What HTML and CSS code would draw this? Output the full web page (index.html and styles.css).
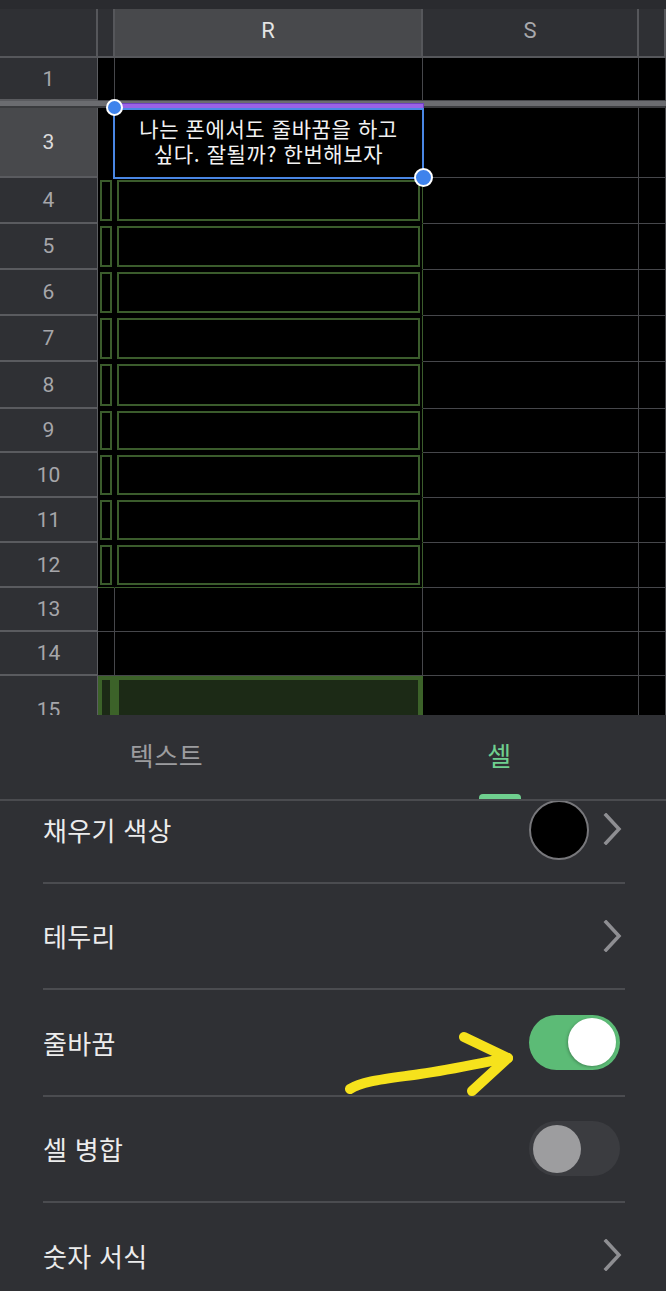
FILE: index.html
```html
<!DOCTYPE html>
<html lang="ko">
<head>
<meta charset="utf-8">
<title>Sheet</title>
<link rel="stylesheet" href="styles.css">
</head>
<body>
<div class="screen">
  <div class="sheet">
    <div class="topstrip"></div>
    <div class="row hdr">
      <div class="c rh"></div><div class="c q"></div><div class="c r colsel">R</div><div class="c s">S</div><div class="c t"></div>
    </div>
    <div class="row h43">
      <div class="c rh">1</div><div class="c q"></div><div class="c r"></div><div class="c s"></div><div class="c t"></div>
    </div>
    <div class="freeze"></div>
    <div class="row h70">
      <div class="c rh rowsel">3</div><div class="c q gq3"></div><div class="c r wrap"><span class="ln">나는 폰에서도 줄바꿈을 하고</span><span class="ln">싶다. 잘될까? 한번해보자</span></div><div class="c s"></div><div class="c t"></div>
    </div>
    <div class="row h46"><div class="c rh">4</div><div class="c q g"></div><div class="c r g gr"></div><div class="c s"></div><div class="c t"></div></div>
    <div class="row h46"><div class="c rh">5</div><div class="c q g"></div><div class="c r g gr"></div><div class="c s"></div><div class="c t"></div></div>
    <div class="row h46"><div class="c rh">6</div><div class="c q g"></div><div class="c r g gr"></div><div class="c s"></div><div class="c t"></div></div>
    <div class="row h46"><div class="c rh">7</div><div class="c q g"></div><div class="c r g gr"></div><div class="c s"></div><div class="c t"></div></div>
    <div class="row h47"><div class="c rh">8</div><div class="c q g"></div><div class="c r g gr"></div><div class="c s"></div><div class="c t"></div></div>
    <div class="row h44"><div class="c rh">9</div><div class="c q g"></div><div class="c r g gr"></div><div class="c s"></div><div class="c t"></div></div>
    <div class="row h45"><div class="c rh">10</div><div class="c q g"></div><div class="c r g gr"></div><div class="c s"></div><div class="c t"></div></div>
    <div class="row h45"><div class="c rh">11</div><div class="c q g"></div><div class="c r g gr"></div><div class="c s"></div><div class="c t"></div></div>
    <div class="row h45 glast"><div class="c rh">12</div><div class="c q g"></div><div class="c r g gr"></div><div class="c s"></div><div class="c t"></div></div>
    <div class="row h44"><div class="c rh">13</div><div class="c q"></div><div class="c r"></div><div class="c s"></div><div class="c t"></div></div>
    <div class="row h44"><div class="c rh">14</div><div class="c q"></div><div class="c r"></div><div class="c s"></div><div class="c t"></div></div>
    <div class="row h70"><div class="c rh">15</div><div class="c q fill15 fq"></div><div class="c r fill15"></div><div class="c s"></div><div class="c t"></div></div>

    <div class="sel-top"></div>
    <div class="selection"></div>
    <div class="handle h-tl"></div>
    <div class="handle h-br"></div>
  </div>

  <div class="panel">
    <div class="tabs">
      <div class="tab"><span class="tab-label">텍스트</span><span class="tab-ind"></span></div>
      <div class="tab active"><span class="tab-label">셀</span><span class="tab-ind"></span></div>
    </div>
    <div class="list">
      <div class="items">
        <div class="item">
          <span class="item-label">채우기 색상</span>
          <span class="item-right">
            <span class="swatch"></span>
            <svg class="chev" width="20" height="32" viewBox="0 0 20 32"><path d="M3 2 L16 16 L3 30" fill="none" stroke="#8e8e92" stroke-width="3.5" stroke-linecap="square"/></svg>
          </span>
        </div>
        <div class="item">
          <span class="item-label">테두리</span>
          <span class="item-right">
            <svg class="chev" width="20" height="32" viewBox="0 0 20 32"><path d="M3 2 L16 16 L3 30" fill="none" stroke="#8e8e92" stroke-width="3.5" stroke-linecap="square"/></svg>
          </span>
        </div>
        <div class="item">
          <span class="item-label">줄바꿈</span>
          <span class="item-right">
            <span class="toggle on"><span class="knob"></span></span>
          </span>
        </div>
        <div class="item">
          <span class="item-label">셀 병합</span>
          <span class="item-right">
            <span class="toggle off"><span class="knob"></span></span>
          </span>
        </div>
        <div class="item">
          <span class="item-label">숫자 서식</span>
          <span class="item-right">
            <svg class="chev" width="20" height="32" viewBox="0 0 20 32"><path d="M3 2 L16 16 L3 30" fill="none" stroke="#8e8e92" stroke-width="3.5" stroke-linecap="square"/></svg>
          </span>
        </div>
      </div>
    </div>
  </div>

  <svg class="arrow" width="666" height="1291" viewBox="0 0 666 1291">
    <path d="M350 1089 C 362 1081, 385 1079, 420 1074 C 455 1069, 485 1062, 508 1058" fill="none" stroke="#f6e21c" stroke-width="10" stroke-linecap="round" stroke-linejoin="round"/>
    <path d="M464 1037 L508 1058 L472 1091" fill="none" stroke="#f6e21c" stroke-width="10" stroke-linecap="round" stroke-linejoin="round"/>
  </svg>
</div>
</body>
</html>
```

FILE: styles.css
```css
html, body {
  margin: 0;
  padding: 0;
  background: #2f3034;
}

.screen {
  position: relative;
  width: 666px;
  height: 1291px;
  overflow: hidden;
  background: #2f3034;
  font-family: Roboto, "Noto Sans CJK KR", sans-serif;
}

/* ---------- sheet ---------- */
.sheet {
  position: relative;
  height: 715px;
  overflow: hidden;
  background: #000;
}

.topstrip {
  height: 9px;
  background: #2a2b2f;
}

.row {
  display: flex;
}

.hdr { height: 49px; }
.h43 { height: 43px; }
.h44 { height: 44px; }
.h45 { height: 45px; }
.h46 { height: 46px; }
.h47 { height: 47px; }
.h70 { height: 70px; }

.c {
  box-sizing: border-box;
  border-right: 1px solid #46474b;
  border-bottom: 1px solid #46474b;
  background: #000;
}

.rh {
  width: 98px;
  flex: none;
  background: #2f3034;
  border-right: 1px solid #5c5d61;
  border-bottom: 2px solid #5a5b5f;
  color: #a6a6aa;
  font-size: 21px;
  display: flex;
  align-items: center;
  justify-content: center;
}

.q { width: 17px; flex: none; }
.r { width: 308px; flex: none; }
.s { width: 216px; flex: none; }
.t { flex: 1; }

.hdr .c {
  background: #2f3034;
  border-right: 2px solid #56575b;
  border-bottom: 2px solid #56575b;
  display: flex;
  align-items: center;
  justify-content: center;
  font-size: 22px;
  color: #a9a9ad;
  padding-bottom: 5px;
}

.hdr .colsel {
  background: #48494c;
  color: #e4e4e4;
}

.rowsel {
  background: #48494c;
  color: #dcdcdc;
}

.freeze {
  height: 7px;
  box-sizing: border-box;
  background: #6b6c70;
  border-bottom: 2px solid #3a3b3e;
}

.wrap {
  display: flex;
  flex-direction: column;
  align-items: center;
  justify-content: center;
  text-align: center;
  color: #f2f2f2;
  font-family: "Noto Sans CJK KR", Roboto, sans-serif;
  font-size: 21px;
  letter-spacing: 0.6px;
  padding-bottom: 6px;
  padding-top: 2px;
}

.ln {
  display: block;
  height: 25px;
  line-height: 25px;
  white-space: nowrap;
}

/* green bordered range */
.g {
  border-right-color: #000;
  border-bottom-color: #000;
  box-shadow: inset 0 0 0 2px #000, inset 0 0 0 4px #3b5c2c;
}

.gr {
  border-right: 1px solid #3b5c2c;
}

.glast .g {
  border-bottom: 1px solid #3b5c2c;
}

.gq3 {
  border-right-color: #000;
  border-bottom-color: #000;
}

.fill15 {
  background: #1c2a16;
  box-shadow: inset 0 0 0 4px #3c6229;
  border-right: 1px solid #3c6229;
}

/* selection */
.sel-top {
  position: absolute;
  left: 114px;
  top: 103px;
  width: 310px;
  height: 6px;
  box-sizing: border-box;
  background: #9a62e6;
  border: 1px solid #6f3fc2;
}

.selection {
  position: absolute;
  left: 113px;
  top: 108px;
  width: 311px;
  height: 71px;
  box-sizing: border-box;
  border: 2px solid #4a87e4;
}

.handle {
  position: absolute;
  box-sizing: border-box;
  border-radius: 50%;
  background: #3f83ec;
  border: 2px solid #ffffff;
}

.h-tl {
  left: 106px;
  top: 99px;
  width: 17px;
  height: 17px;
}

.h-br {
  left: 414px;
  top: 168px;
  width: 19px;
  height: 19px;
}

/* ---------- panel ---------- */
.panel {
  height: 576px;
  background: #2f3034;
  font-family: "Noto Sans CJK KR", Roboto, sans-serif;
  display: flex;
  flex-direction: column;
}

.tabs {
  display: flex;
  height: 86px;
  box-sizing: border-box;
  border-bottom: 2px solid #4a4b4f;
  flex: none;
}

.tab {
  flex: 1;
  display: flex;
  flex-direction: column;
  align-items: center;
}

.tab-label {
  flex: 1;
  display: flex;
  align-items: center;
  font-size: 26px;
  letter-spacing: 0.5px;
  color: #9c9c9f;
  padding-bottom: 1px;
}

.tab-ind {
  width: 42px;
  height: 5px;
  border-radius: 4px 4px 0 0;
}

.tab.active .tab-label {
  color: #6fcf8f;
}

.tab.active .tab-ind {
  background: #6fcf8f;
}

.list {
  flex: 1;
  overflow: hidden;
}

.items {
  margin-top: -24px;
}

.item {
  height: 106.5px;
  box-sizing: border-box;
  margin: 0 41px 0 43px;
  border-bottom: 2px solid #4b4c50;
  display: flex;
  align-items: center;
  justify-content: space-between;
}

.item-label {
  font-size: 26px;
  letter-spacing: 0.3px;
  color: #ececec;
}

.item-right {
  display: flex;
  align-items: center;
  gap: 14px;
}

.chev {
  display: block;
  margin-right: 2px;
}

.swatch {
  width: 60px;
  height: 60px;
  box-sizing: border-box;
  border-radius: 50%;
  background: #000;
  border: 2px solid #77777b;
  margin-top: 2px;
}

.toggle {
  width: 91px;
  height: 55px;
  border-radius: 28px;
  box-sizing: border-box;
  padding: 4px;
  display: flex;
  margin-right: 5px;
}

.toggle.on {
  background: #5cbb76;
  justify-content: flex-end;
}

.toggle.off {
  background: #3b3c40;
  justify-content: flex-start;
}

.knob {
  width: 48px;
  height: 48px;
  border-radius: 50%;
  margin-top: -0.5px;
}

.toggle.on .knob {
  background: #ffffff;
  box-shadow: -1px 1px 3px rgba(0,0,0,0.25);
}

.toggle.off .knob {
  background: #9d9d9f;
}

.arrow {
  position: absolute;
  left: 0;
  top: 0;
  pointer-events: none;
}
```
